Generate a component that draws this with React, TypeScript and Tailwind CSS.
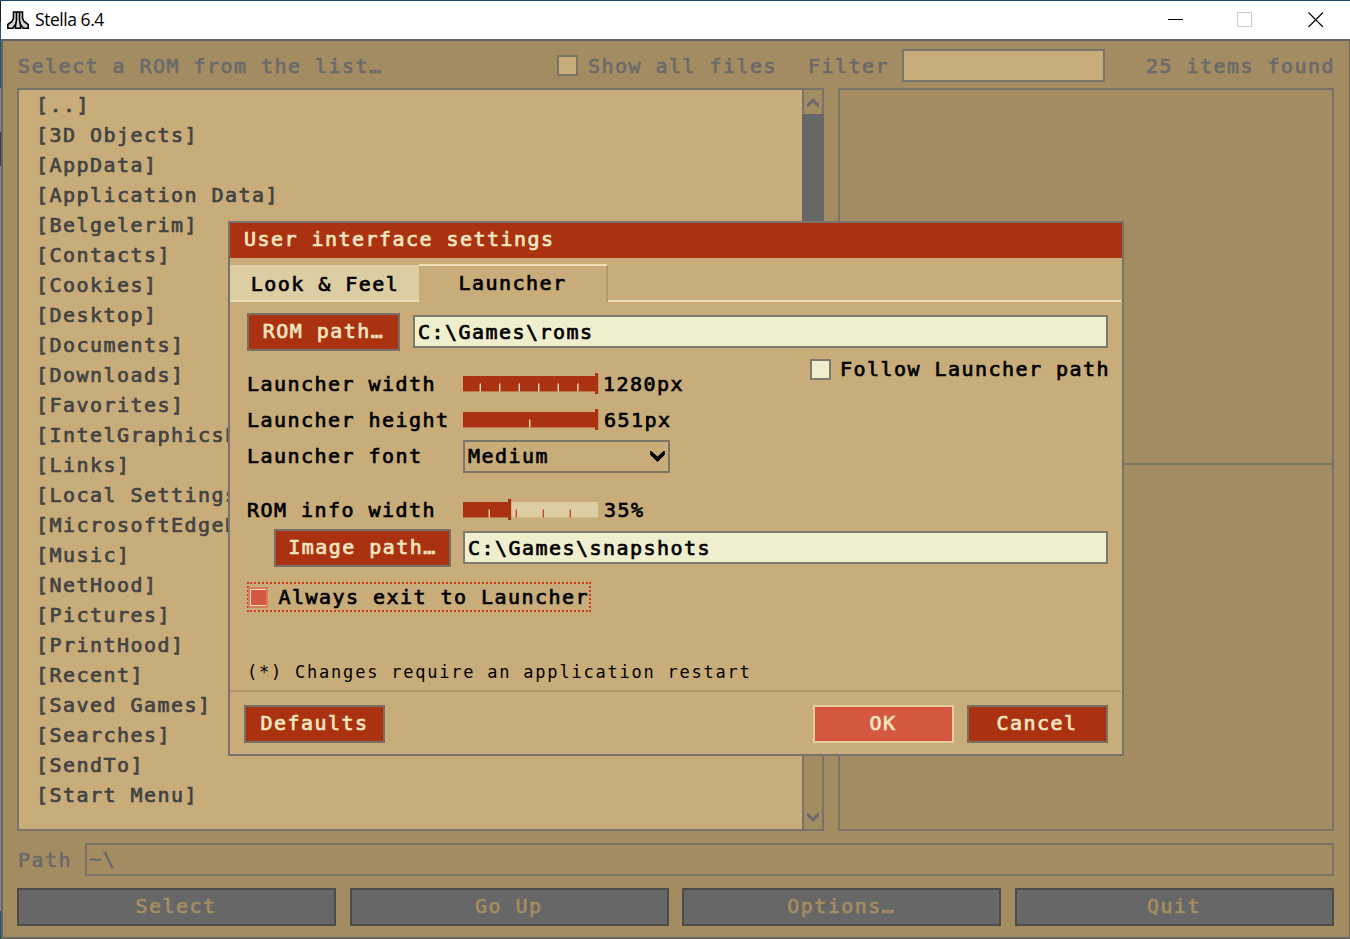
import { useState } from "react";

const folders = [
  "[..]",
  "[3D Objects]",
  "[AppData]",
  "[Application Data]",
  "[Belgelerim]",
  "[Contacts]",
  "[Cookies]",
  "[Desktop]",
  "[Documents]",
  "[Downloads]",
  "[Favorites]",
  "[IntelGraphicsP",
  "[Links]",
  "[Local Settings]",
  "[MicrosoftEdgeB",
  "[Music]",
  "[NetHood]",
  "[Pictures]",
  "[PrintHood]",
  "[Recent]",
  "[Saved Games]",
  "[Searches]",
  "[SendTo]",
  "[Start Menu]",
];

function TitleBar() {
  return (
    <div className="flex h-[38px] items-center bg-white pl-[6px] tracking-normal text-black [-webkit-text-stroke-width:0]">
      <svg width="22" height="19" viewBox="0 0 22 19" fill="#d8d8d8" stroke="#000" strokeWidth="1.6">
        <path d="M6.5 1H15.5V7L17 10.5L21.2 13.5V17.2H16.2L13.5 13.5V17.2H8.5V13.5L5.8 17.2H0.8V13.5L5 10.5L6.5 7Z" />
        <path d="M9.5 1V9.5L8.5 13.5M12.5 1V9.5L13.5 13.5" />
      </svg>
      <span className="ml-[6px] font-['Open_Sans','Noto_Sans',sans-serif] text-[17.5px] leading-none tracking-[-0.45px]">Stella 6.4</span>
      <svg className="ml-auto mr-[26px]" width="156" height="16" viewBox="0 0 156 16" fill="none" shapeRendering="crispEdges">
        <path d="M0 7.5H15" stroke="#000" />
        <rect x="69.5" y="0.5" width="14" height="14" stroke="#ccc" />
        <path d="M140.5 0.5L155 15M155 0.5L140.5 15" stroke="#000" shapeRendering="auto" strokeWidth="1.1" />
      </svg>
    </div>
  );
}

function Chevron({ className, up }: { className?: string; up?: boolean }) {
  return (
    <svg className={className} viewBox="0 0 12 9" fill="currentColor">
      {up ? <path d="M6 0L12 6V9H11L6 4.4L1 9H0V6Z" /> : <path d="M6 9L12 3V0H11L6 4.6L1 0H0V3Z" />}
    </svg>
  );
}

function Slider({ fill, ticks }: { fill: number; ticks: number[] }) {
  return (
    <svg width="136" height="22" viewBox="0 0 136 22">
      <rect y="3" width="135" height="15.5" fill="#dccda3" />
      <rect y="3" width={fill} height="15.5" fill="#ab3211" />
      <rect x={fill - 3} width="3.2" height="21" fill="#ab3211" />
      {ticks.map((t) => (
        <rect key={t} x={t} y="10.5" width="1.4" height="8" fill={t < fill ? "#efdcb8" : "#c14c2a"} />
      ))}
    </svg>
  );
}

function Browser() {
  return (
    <div className="flex flex-1 flex-col border-2 border-r border-[#666462] bg-[#a38c61] pl-[14px] pr-[15px] text-[#6b6b6b]">
      <div className="mt-[8px] flex h-[33px] items-center">
        <span className="w-[540px] pl-px">Select a ROM from the list…</span>
        <span className="h-[21px] w-[21px] border-2 border-[#79736a] bg-[#c8ad7a]" />
        <span className="ml-[10px] w-[220px]">Show all files</span>
        <span>Filter</span>
        <div className="ml-[13px] h-[33px] w-[203px] border-2 border-[#79736a] bg-[#c8ad7a]" />
        <span className="-mr-px ml-auto">25 items found</span>
      </div>
      <div className="mt-[6px] flex h-[743px]">
        <div className="w-[785px] overflow-hidden border-2 border-r-0 border-[#79736a] bg-[#c8ad7a] pl-[17px] text-[#434343]">
          {folders.map((name) => (
            <div key={name} className="h-[30px] leading-[30px]">{name}</div>
          ))}
        </div>
        <div className="flex w-[22px] flex-col items-center justify-between border-2 border-[#79736a]">
          <div className="flex h-[24px] items-center">
            <Chevron up className="h-[9px] w-[12px]" />
          </div>
          <div className="-mx-[2px] h-[560px] w-[22px] bg-[#676767]" />
          <div className="flex h-[155px] items-end pb-[7px]">
            <Chevron className="h-[9px] w-[12px]" />
          </div>
        </div>
        <div className="ml-[14px] flex-1 border-2 border-[#79736a]">
          <div className="h-[375px] border-b-2 border-[#79736a]" />
        </div>
      </div>
      <div className="mt-[12px] flex h-[33px] items-center">
        <span className="w-[68px] pl-px">Path</span>
        <div className="h-[33px] flex-1 border-2 border-[#79736a] pl-[2px] leading-[28px]">~\</div>
      </div>
      <div className="mt-[12px] flex h-[38px] justify-between">
        {["Select", "Go Up", "Options…", "Quit"].map((label) => (
          <button key={label} className="w-[319px] border-2 border-[#4e4c48] bg-[#676767] pb-[2px] pr-px text-[#a38c61]">{label}</button>
        ))}
      </div>
    </div>
  );
}

const button = "h-[38px] border-2 border-[#776e64] bg-[#ab3211] pb-[2px] text-[#f0e6c0]";
const field = "h-[33px] border-2 border-[#7d7a6e] bg-[#efefce] pl-[3px] leading-[30px]";

function SettingsDialog() {
  const [follow, setFollow] = useState(false);
  const [exit, setExit] = useState(true);

  return (
    <div className="absolute left-[228px] top-[221px] flex h-[535px] w-[896px] flex-col border-2 border-[#77736d] bg-[#c8ad7a] text-black">
      <div className="h-[35px] bg-[#ab3211] pl-[14px] leading-[32px] text-[#f0e6c0]">User interface settings</div>

      <div className="mt-[6px] flex h-[38px]">
        <div className="mt-[1px] h-[37px] w-[189px] border-b-2 border-[#eadcb4] bg-[#dccda3] pl-px text-center leading-[38px]">Look &amp; Feel</div>
        <div className="w-[189px] border-r-2 border-t-2 border-r-[#b29a6c] border-t-[#efe0b8] text-center leading-[34px]">Launcher</div>
        <div className="mr-[1px] flex-1 border-b-2 border-[#eadcb4]" />
      </div>

      <div className="ml-[17px] mr-[14px] mt-[11px] flex h-[38px] items-center">
        <button className={`${button} w-[153px]`}>ROM path…</button>
        <div className={`${field} -mt-[1px] ml-[13px] flex-1`}>C:\Games\roms</div>
      </div>

      <div className="ml-[17px] mr-[12px] flex h-[124px] justify-between">
        <div className="pt-[15px]">
          <div className="flex h-[36px] items-center">
            <span className="w-[216px]">Launcher width</span>
            <Slider fill={135} ticks={[16.6, 36, 55.6, 75, 94.6, 114.2]} />
            <span className="ml-[4px]">1280px</span>
          </div>
          <div className="flex h-[36px] items-center">
            <span className="w-[216px]">Launcher height</span>
            <Slider fill={135} ticks={[66]} />
            <span className="ml-[5px]">651px</span>
          </div>
          <div className="flex h-[36px] items-center">
            <span className="w-[216px]">Launcher font</span>
            <div className="flex h-[33px] w-[207px] items-center justify-between border-2 border-[#7d7566] pl-[3px] pr-[3px]">
              Medium
              <Chevron className="h-[11px] w-[15px]" />
            </div>
          </div>
        </div>
        <div className="mt-[6px] flex h-[24px] items-center" onClick={() => setFollow(!follow)}>
          <span className="h-[21px] w-[21px] border-2 border-[#7d7a6e] bg-[#efefce] p-[2px]">
            {follow && <span className="block h-full w-full bg-[#ab3211]" />}
          </span>
          <span className="ml-[9px]">Follow Launcher path</span>
        </div>
      </div>

      <div className="ml-[17px] mt-[17px] flex h-[36px] items-center">
        <span className="w-[216px]">ROM info width</span>
        <Slider fill={48} ticks={[25.6, 52.6, 79.6, 106.6]} />
        <span className="ml-[5px]">35%</span>
      </div>

      <div className="ml-[44px] mr-[14px] mt-[1px] flex h-[38px] items-center">
        <button className={`${button} w-[177px]`}>Image path…</button>
        <div className={`${field} -mt-[1px] ml-[12px] flex-1`}>C:\Games\snapshots</div>
      </div>

      <div
        className="ml-[17px] mt-[15px] flex h-[30px] w-[344px] items-center border-2 border-dotted border-[#d23a22]"
        onClick={() => setExit(!exit)}
      >
        <span className="-ml-px flex h-[21px] w-[21px] items-center justify-center border-2 border-[#dc7a5c] bg-[#f0e0c0]">
          {exit && <span className="h-[15px] w-[15px] bg-[#d55840]" />}
        </span>
        <span className="ml-[10px]">Always exit to Launcher</span>
      </div>

      <div className="ml-[17px] mt-[45px] h-[30px] text-[17px] leading-[30px] tracking-[1.78px] [-webkit-text-stroke-width:0]">
        (*) Changes require an application restart
      </div>

      <div className="mr-[1px] mt-[3px] h-[2px] bg-[#b39768]" />

      <div className="ml-[14px] mr-[14px] mt-[13px] flex">
        <button className={`${button} w-[141px]`}>Defaults</button>
        <button className="ml-auto h-[38px] w-[141px] border-2 border-[#e3cfa2] bg-[#d55840] pb-[2px] pr-px text-[#f0e6c0]">OK</button>
        <button className={`${button} ml-[13px] w-[141px] pr-px`}>Cancel</button>
      </div>
    </div>
  );
}

export default function App() {
  return (
    <div className="relative flex h-[939px] w-[1350px] overflow-hidden whitespace-pre bg-[#1c4a70] pt-px font-['DejaVu_Sans_Mono','Liberation_Mono',monospace] text-[20px] tracking-[1.46px] [-webkit-text-stroke-width:0.7px]">
      {/* sliver of the desktop behind the window */}
      <div className="w-px bg-[linear-gradient(#1e1e1e_21px,#175a7c_21px,#175a7c_87px,#8a8a8a_87px,#8a8a8a_131px,#3c3c44_131px,#3c3c44_165px,#8a8a8a_165px,#8a8a8a_910px,#175a7c_910px)]" />
      <div className="flex w-[1349px] flex-col">
        <TitleBar />
        <Browser />
      </div>
      <SettingsDialog />
    </div>
  );
}
